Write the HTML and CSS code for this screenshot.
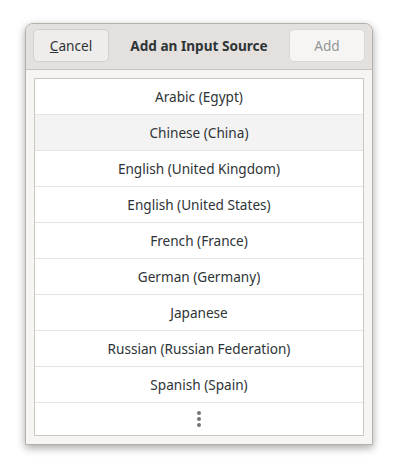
FILE: index.html
```html
<html>
<head>
  <title>Add an Input Source</title>
  <link rel="stylesheet" href="styles.css">
</head>
<body>
  <div class="dialog">
    <div class="headerbar">
      <button class="btn"><u>C</u>ancel</button>
      <span class="title">Add an Input Source</span>
      <button class="btn disabled">Add</button>
    </div>
    <div class="content">
      <div class="listbox">
        <div class="row">Arabic (Egypt)</div>
        <div class="row hover">Chinese (China)</div>
        <div class="row">English (United Kingdom)</div>
        <div class="row">English (United States)</div>
        <div class="row">French (France)</div>
        <div class="row">German (Germany)</div>
        <div class="row">Japanese</div>
        <div class="row">Russian (Russian Federation)</div>
        <div class="row">Spanish (Spain)</div>
        <div class="row more">
          <span class="dots"><span></span><span></span><span></span></span>
        </div>
      </div>
    </div>
  </div>
</body>
</html>
```

FILE: styles.css
```css
body {
  margin: 0;
  background: #ffffff;
  font-family: "Noto Sans", sans-serif;
  font-size: 13.6px;
  color: #2e3436;
}
.dialog {
  width: 346px;
  margin: 23px 0 0 25px;
  background: #f6f5f4;
  border: 1px solid #b6b0aa;
  border-radius: 8px 8px 0 0;
  box-shadow: 0 3px 9px rgba(0, 0, 0, 0.35);
}
.headerbar {
  height: 45px;
  display: flex;
  align-items: center;
  justify-content: space-between;
  padding: 0 7px;
  background: #e3e0dd;
  border-bottom: 1px solid #c9c3bd;
  border-radius: 7px 7px 0 0;
}
.btn {
  width: 76px;
  height: 33px;
  margin-bottom: 2px;
  font-family: inherit;
  font-size: 13.6px;
  color: #2e3436;
  background: #efedeb;
  border: 1px solid #d3cfcb;
  border-radius: 5px;
  padding: 0;
}
.btn.disabled {
  background: #f6f5f4;
  color: #929595;
  border-color: #dcd8d4;
}
.title {
  font-weight: bold;
  margin-bottom: 3px;
}
.content {
  padding: 8px;
}
.listbox {
  background: #ffffff;
  border: 1px solid #cdc7c2;
}
.row {
  height: 35px;
  display: flex;
  align-items: center;
  justify-content: center;
  border-bottom: 1px solid #e6e4e2;
}
.row.more {
  height: 32px;
  border-bottom: none;
}
.row.hover {
  background: #f3f3f3;
}
.dots {
  display: flex;
  flex-direction: column;
  gap: 2px;
}
.dots span {
  width: 4px;
  height: 4px;
  border-radius: 50%;
  background: #727676;
}
```
